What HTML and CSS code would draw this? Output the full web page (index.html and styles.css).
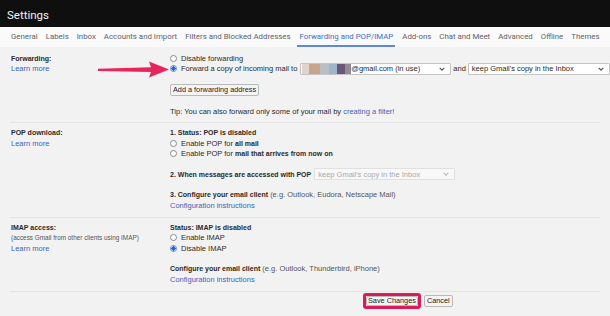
FILE: index.html
```html
<!DOCTYPE html>
<html lang="en">
<head>
    <meta charset="UTF-8">
    <meta name="viewport" content="width=device-width, initial-scale=1.0">
    <title>Settings - Forwarding and POP/IMAP</title>
    <link rel="stylesheet" href="styles.css">
</head>
<body>

<header class="topbar">
    <span class="title">Settings</span>
</header>

<nav class="tabs">
    <a class="tab">General</a>
    <a class="tab">Labels</a>
    <a class="tab">Inbox</a>
    <a class="tab">Accounts and Import</a>
    <a class="tab">Filters and Blocked Addresses</a>
    <a class="tab active">Forwarding and POP/IMAP</a>
    <a class="tab">Add-ons</a>
    <a class="tab">Chat and Meet</a>
    <a class="tab">Advanced</a>
    <a class="tab">Offline</a>
    <a class="tab">Themes</a>
</nav>

<main class="content">
    <section class="section forwarding">
        <div class="label">
            <div class="line"><b>Forwarding:</b></div>
            <div class="line"><a class="link">Learn more</a></div>
        </div>
        <div class="opts">
            <div class="line"><span class="radio"></span>Disable forwarding</div>
            <div class="line">
                <span class="radio on"></span>Forward a copy of incoming mail to
                <span class="select email">
                    <span class="blur">
                        <i style="background:#e2d4c8;width:7px"></i>
                        <i style="background:#c9a68b;width:11px"></i>
                        <i style="background:#b8c0c6;width:9px"></i>
                        <i style="background:#9db6cb;width:8px"></i>
                        <i style="background:#6b5679;width:8px"></i>
                        <i style="background:#928c90;width:6px"></i>
                    </span>@gmail.com (in use)
                    <svg class="chev" viewBox="0 0 6 4"><path d="M0.7 0.8 L3 3.1 L5.3 0.8" /></svg>
                </span>
                <span class="and">and</span>
                <span class="select keep">keep Gmail's copy in the Inbox
                    <svg class="chev" viewBox="0 0 6 4"><path d="M0.7 0.8 L3 3.1 L5.3 0.8" /></svg>
                </span>
            </div>
            <div class="btn-row"><button class="btn">Add a forwarding address</button></div>
            <div class="line tip">Tip: You can also forward only some of your mail by&nbsp;<a class="link">creating a filter!</a></div>
        </div>
        <svg class="arrow" viewBox="0 0 71 17">
            <path d="M0 7.8 L53 6.2 L51 0.5 L71 8.4 L51 16.5 L53 11 L0 10 Z" />
        </svg>
    </section>

    <section class="section pop">
        <div class="label">
            <div class="line"><b>POP download:</b></div>
            <div class="line"><a class="link">Learn more</a></div>
        </div>
        <div class="opts">
            <div class="line"><b>1. Status: POP is disabled</b></div>
            <div class="line"><span class="radio"></span>Enable POP for&nbsp;<b>all mail</b></div>
            <div class="line"><span class="radio"></span>Enable POP for&nbsp;<b>mail that arrives from now on</b></div>
            <div class="line gap">
                <b>2. When messages are accessed with POP</b>
                <span class="select off">keep Gmail's copy in the Inbox
                    <svg class="chev" viewBox="0 0 6 4"><path d="M0.7 0.8 L3 3.1 L5.3 0.8" /></svg>
                </span>
            </div>
            <div class="line gap"><b>3. Configure your email client</b>&nbsp;<span class="muted">(e.g. Outlook, Eudora, Netscape Mail)</span></div>
            <div class="line"><a class="link">Configuration instructions</a></div>
        </div>
    </section>

    <section class="section imap">
        <div class="label">
            <div class="line"><b>IMAP access:</b></div>
            <div class="line small">(access Gmail from other clients using IMAP)</div>
            <div class="line"><a class="link">Learn more</a></div>
        </div>
        <div class="opts">
            <div class="line"><b>Status: IMAP is disabled</b></div>
            <div class="line"><span class="radio"></span>Enable IMAP</div>
            <div class="line"><span class="radio on"></span>Disable IMAP</div>
            <div class="line gap"><b>Configure your email client</b>&nbsp;<span class="muted">(e.g. Outlook, Thunderbird, iPhone)</span></div>
            <div class="line"><a class="link">Configuration instructions</a></div>
        </div>
    </section>

    <div class="actions">
        <span class="highlight"><button class="btn">Save Changes</button></span>
        <button class="btn">Cancel</button>
    </div>
</main>

</body>
</html>
```

FILE: styles.css
```css
body {
    margin: 0;
    font-family: "Liberation Sans", Arial, sans-serif;
    font-size: 7.5px;
    color: #2a2a2a;
    background-color: #f2f2f2;
    overflow: hidden;
}

b {
    font-size: 7px;
}

.topbar {
    height: 27px;
    background-color: #0f0f0f;
    display: flex;
    align-items: center;
    padding-left: 7px;
    padding-top: 3px;
    box-sizing: border-box;
}

.title {
    font-family: Roboto, sans-serif;
    font-size: 11.5px;
    color: #f2f2f2;
}

.tabs {
    height: 20px;
    background-color: #fafafa;
    display: flex;
    gap: 8px;
    padding-left: 11px;
    font-family: Roboto, sans-serif;
    font-size: 7.85px;
    color: #5f6368;
    white-space: nowrap;
}

.tab {
    display: flex;
    align-items: center;
    padding-top: 1px;
    border-bottom: 2px solid transparent;
}

.tab.active {
    color: #3d6fc6;
    border-bottom-color: #5e8ad3;
    padding: 1px 2px 0;
    margin: 0 -1px;
}

.content {
    padding: 0 10px;
}

.section {
    display: grid;
    grid-template-columns: 159px 1fr;
    padding-left: 1px;
    border-bottom: 1px solid #e4e4e4;
    position: relative;
}

.forwarding {
    padding-top: 6px;
    padding-bottom: 5.5px;
}

.pop {
    padding-top: 4.5px;
    padding-bottom: 6.5px;
}

.imap {
    padding-top: 4px;
    padding-bottom: 6.5px;
}

.line {
    display: flex;
    align-items: center;
    height: 10.5px;
    white-space: nowrap;
}

.line.gap {
    margin-top: 10px;
}

.small {
    font-size: 6.4px;
    color: #555;
}

.muted {
    color: #555;
}

.link {
    color: #3a66b8;
}

.radio {
    width: 7px;
    height: 7px;
    box-sizing: border-box;
    border: 1px solid #8a8a8a;
    border-radius: 50%;
    background-color: #fff;
    margin-right: 4px;
    flex-shrink: 0;
}

.radio.on {
    border-color: #5d8fde;
    background: radial-gradient(circle, #2f66c8 0 2px, #fff 2.3px);
}

.select {
    display: inline-flex;
    align-items: center;
    height: 12px;
    box-sizing: border-box;
    border: 1px solid #c4c4c4;
    border-radius: 1px;
    background-color: #fff;
    padding-left: 3px;
    position: relative;
    flex-shrink: 0;
}

.select.email {
    width: 151px;
    margin-left: 3px;
    padding-left: 1px;
}

.select.keep {
    width: 142px;
    margin-left: 2px;
}

.select.off {
    width: 141px;
    margin-left: 3px;
    color: #aaa;
    border-color: #e0e0e0;
    background-color: #f8f8f8;
}

.blur {
    display: flex;
    height: 10px;
}

.blur i {
    display: block;
    height: 10px;
}

.chev {
    position: absolute;
    right: 5px;
    top: 3px;
    width: 6px;
    height: 4px;
    fill: none;
    stroke: #555;
    stroke-width: 1.2;
}

.select.off .chev {
    stroke: #bbb;
}

.and {
    margin-left: 2px;
}

.btn {
    font-family: "Liberation Sans", Arial, sans-serif;
    font-size: 7.3px;
    color: #222;
    background-color: #f4f4f4;
    border: 1px solid #b9b9b9;
    border-radius: 2px;
    height: 12px;
    padding: 0 2px;
    line-height: 10px;
    white-space: nowrap;
    cursor: pointer;
}

.btn-row {
    display: flex;
    margin-top: 10px;
}

.tip {
    margin-top: 10px;
}

.arrow {
    position: absolute;
    left: 88px;
    top: 14px;
    width: 71px;
    height: 17px;
    fill: #e8245c;
}

.actions {
    display: flex;
    align-items: center;
    gap: 3px;
    padding-left: 353px;
    padding-top: 1px;
}

.highlight {
    display: inline-flex;
    border: 3px solid #d91c5c;
    border-radius: 3px;
}

.highlight .btn {
    height: 10px;
    line-height: 8px;
    padding: 0 1px;
}
```
